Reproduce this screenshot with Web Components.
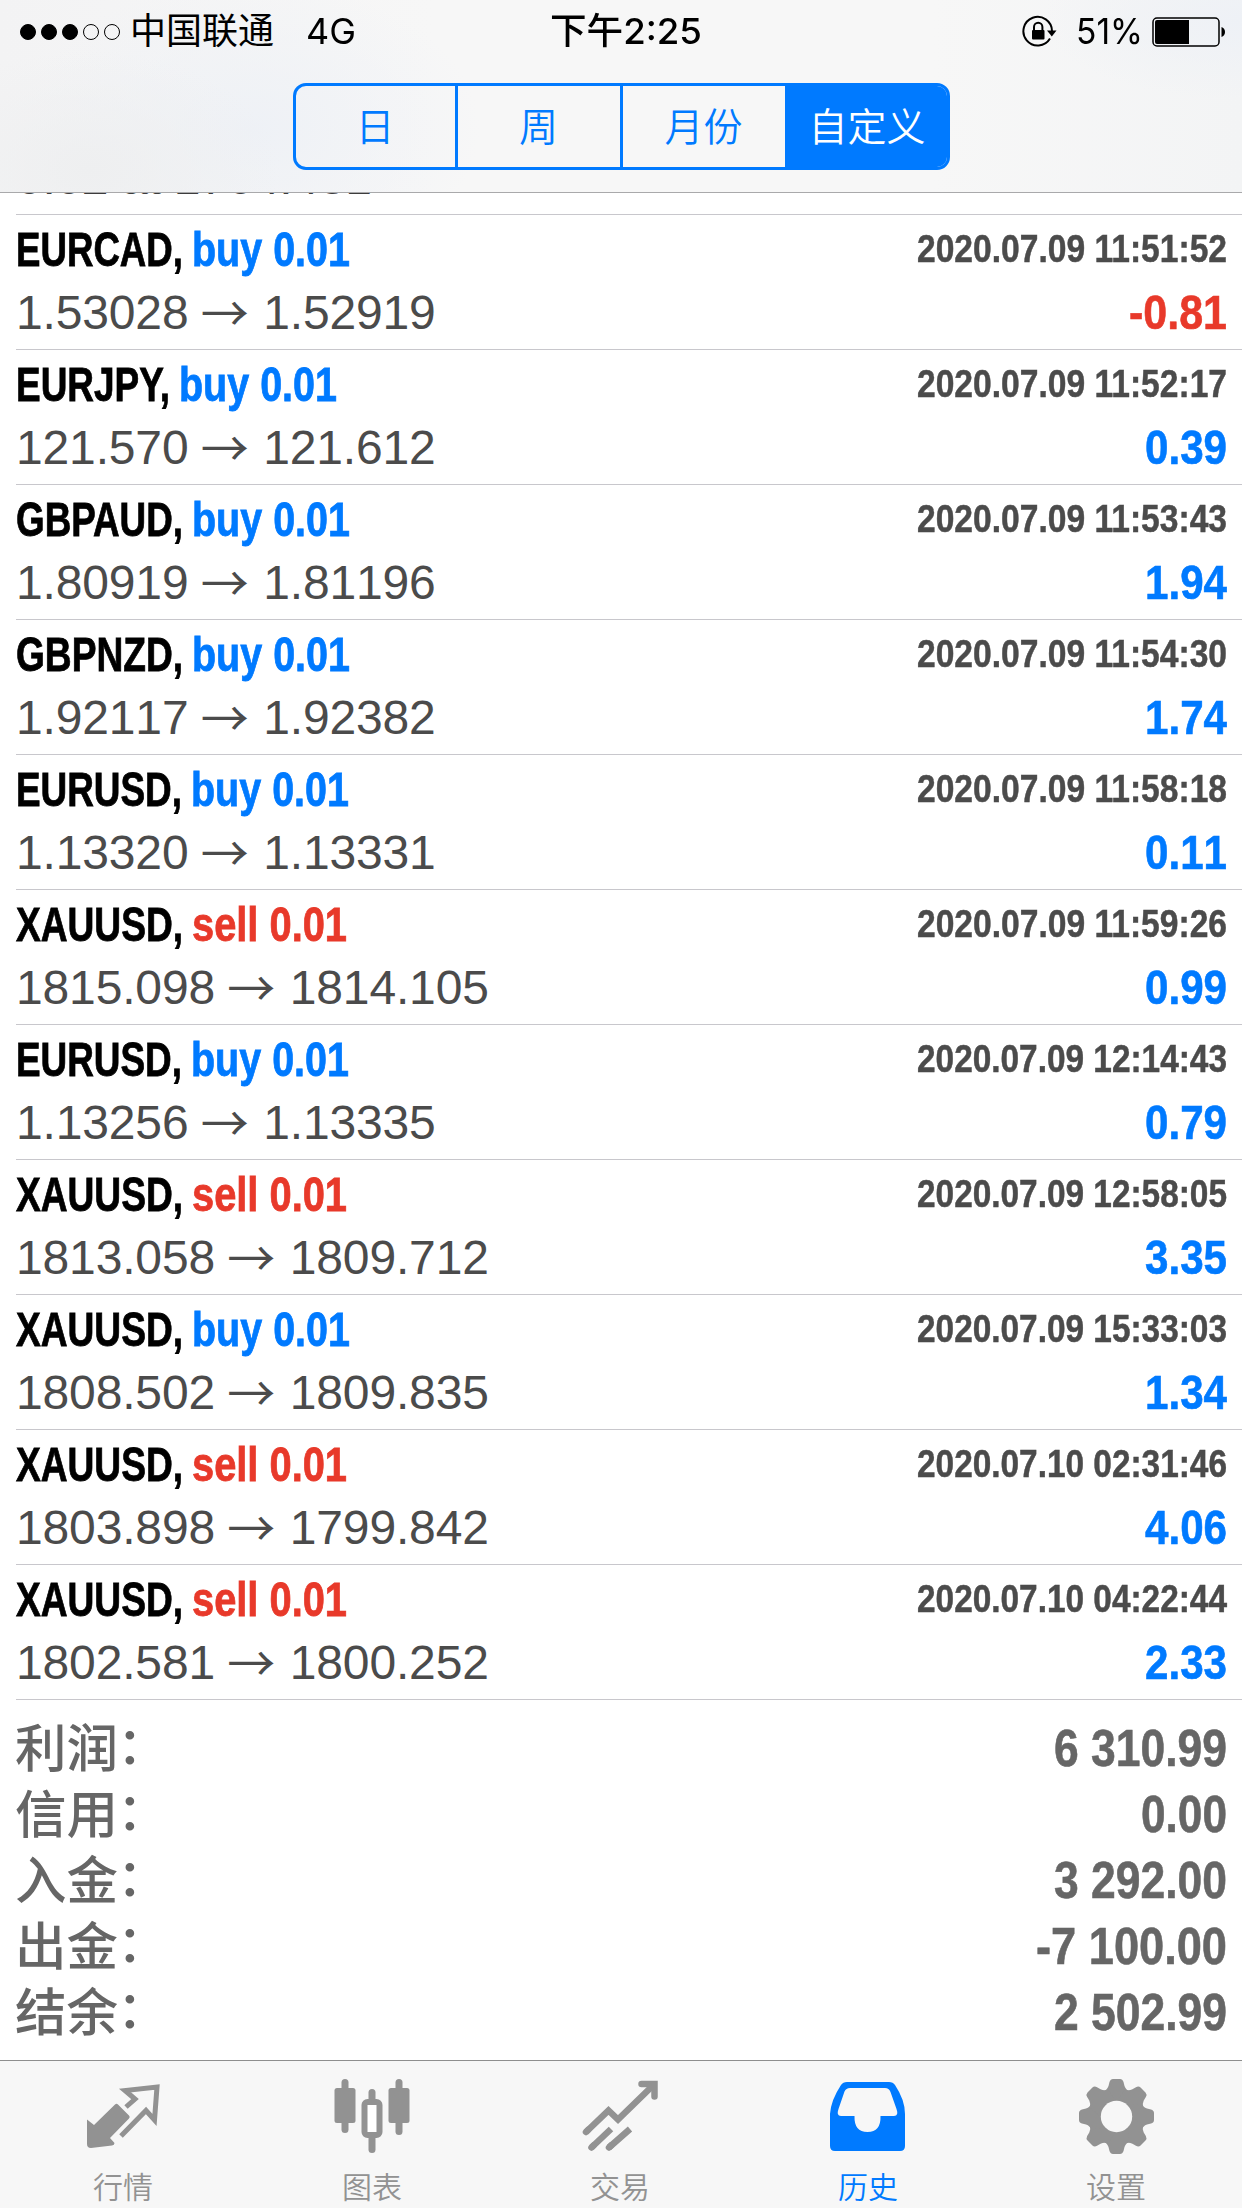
<!DOCTYPE html>
<html lang="zh-CN">
<head>
<meta charset="utf-8">
<title>历史</title>
<style>
html,body{margin:0;padding:0;background:#fff}
body{width:1242px;height:2208px;overflow:hidden;font-family:"Liberation Sans","Noto Sans CJK SC",sans-serif}
</style>
</head>
<body>
<history-app></history-app>
<script>
const define = (name, render, after) => customElements.define(name, class extends HTMLElement {
  connectedCallback() {
    if (this.shadowRoot) return;
    this.attachShadow({ mode: "open" }).innerHTML = render(this);
    if (after) after(this);
  }
});

/* Text condensed horizontally to a given advance width */
define("condensed-text", el => `<style>
  :host{display:block;flex:none;white-space:pre;width:${el.getAttribute("w")}px}
  span{display:inline-block;transform-origin:0 50%}
</style><span>${el.getAttribute("text")}</span>`, el => {
  const s = el.shadowRoot.querySelector("span");
  s.style.transform = `scaleX(${el.getAttribute("w") / s.getBoundingClientRect().width})`;
});

define("status-bar", () => `<style>
  :host{display:grid;grid-template-columns:1fr 152px 1fr;height:60px;align-items:center;font:36px/63px Inter,"Noto Sans CJK SC",sans-serif;color:#000;white-space:pre}
  .l,.r{display:flex;align-items:center;height:60px}
  .l{padding-left:20px}
  .dots{display:flex;gap:5px;margin-right:10px}
  i{box-sizing:border-box;width:16px;height:16px;border:1.3px solid #000;border-radius:50%}
  i.on{background:#000}
  .net{margin-left:32px}
  .t{font-weight:500;margin-left:5px}
  .r{justify-content:flex-end;padding-right:16px}
  svg{display:block}
  .pct{margin:0 9px 0 18px}
</style>
<div class="l"><div class="dots"><i class="on"></i><i class="on"></i><i class="on"></i><i></i><i></i></div><span>中国联通</span><condensed-text class="net" w="50" text="4G"></condensed-text></div>
<condensed-text class="t" w="152" text="下午2:25"></condensed-text>
<div class="r">
<svg width="36" height="34" viewBox="0 0 36 34" fill="none" stroke="#000" stroke-width="2"><path d="M28 23.500A14.300 14.300 0 1 1 30 16"/><path d="M25 15.500h9.500l-4.700 6z" fill="#000" stroke="none"/><rect x="10" y="15" width="12.500" height="9.500" rx="1" fill="#000" stroke="none"/><path d="M12 16v-4a4.200 4.200 0 0 1 8.400 0V16"/></svg>
<condensed-text class="pct" w="67" text="51%"></condensed-text>
<svg width="74" height="32" viewBox="0 0 74 32"><rect x="1" y="2" width="66" height="28" rx="4" fill="none" stroke="#000" stroke-width="1.500"/><path d="M5 4h32v24H5a2 2 0 0 1-2-2V6a2 2 0 0 1 2-2z"/><path d="M69.500 11c2 .5 3.500 2.500 3.500 5s-1.500 4.500-3.500 5z"/></svg>
</div>`);

define("segment-control", () => `<style>
  :host{display:grid;grid-template-columns:159px 165px 165px 162px;box-sizing:border-box;width:657px;height:87px;border:3px solid #007aff;border-radius:13px;overflow:hidden;margin:0 auto;color:#007aff;font:350 39px/76px "Noto Sans CJK SC",sans-serif;text-align:center}
  div+div{border-left:3px solid #007aff}
  div:first-child{padding-right:4px}
  .on{background:#007aff;color:#fff}
</style><div>日</div><div>周</div><div>月份</div><div class="on">自定义</div>`);

define("nav-header", () => `<style>
  :host{display:block;box-sizing:border-box;height:193px;border-bottom:1px solid #a9a9ab;
   background:radial-gradient(ellipse 190px 120px at 90px 170px,#eeeff0,#eeeff000),radial-gradient(ellipse 230px 150px at 250px 130px,#eef1f6,#eef1f600),radial-gradient(ellipse 200px 80px at 1242px 20px,#eef1f6,#eef1f600),linear-gradient(90deg,#f3f3f4,#f7f7f7 35%,#f7f7f7 75%,#f3f4f5)}
  segment-control{margin-top:23px}
</style><status-bar></status-bar><segment-control></segment-control>`);

define("deal-row", el => {
  const a = n => el.getAttribute(n);
  return `<style>
  :host{display:block;box-sizing:border-box;height:135px;margin-left:16px;padding-right:15px;border-bottom:1px solid #c8c7cc}
  .a,.b{display:flex;align-items:flex-start}
  .a{height:64px;line-height:70px;font-weight:700;font-size:48px}
  .b{height:70px;line-height:68px;font-size:48px;color:#4b4b4b;font-kerning:none}
  .name,.op{-webkit-text-stroke:.8px currentColor}
  .op{margin-left:8.500px}
  .time{font-size:39px;line-height:68px;color:#4b4b4b;-webkit-text-stroke:.5px currentColor}
  .sp{flex:1}
  .v{letter-spacing:-.15px}
  .arr{display:inline-block;font-family:"Noto Sans CJK SC",sans-serif;font-weight:400;line-height:1px;vertical-align:-1.500px;margin:0 1.500px 0 -1px}
  .buy{color:#007aff}.sell{color:#e8392a}
  .p{font-weight:700;-webkit-text-stroke:.6px currentColor}
</style>
<div class="a"><condensed-text class="name" w="${a("sw")}" text="${a("symbol")},"></condensed-text><condensed-text class="op ${a("side")}" w="${a("side") === "buy" ? 158 : 155}" text="${a("side")} 0.01"></condensed-text><span class="sp"></span><condensed-text class="time" w="310" text="${a("time")}"></condensed-text></div>
<div class="b"><span class="v">${a("from")} <span class="arr">→</span> ${a("to")}</span><span class="sp"></span><condensed-text class="p ${a("profit")[0] === "-" ? "sell" : "buy"}" w="${a("profit")[0] === "-" ? 98 : 82}" text="${a("profit")}"></condensed-text></div>`;
});

define("total-row", el => `<style>
  :host{display:flex;align-items:flex-start;height:66px;line-height:66px;padding:0 15px 0 15px;color:#666;font-weight:700;font-size:51px}
  .k{flex:1;font:500 51.500px/66px "Noto Sans CJK SC",sans-serif}
  .c{position:relative;top:-3px;left:-1px}
  condensed-text{line-height:74px;-webkit-text-stroke:.6px currentColor}
</style><span class="k">${el.getAttribute("label")}<span class="c">：</span></span><condensed-text w="${el.getAttribute("w")}" text="${el.getAttribute("value")}"></condensed-text>`);

define("tab-item", el => `<style>
  :host{display:flex;flex-direction:column;align-items:center;color:#929292}
  :host([active]){color:#007aff}
  svg{display:block;margin-top:15px}
  span{font:350 30px/36px "Noto Sans CJK SC",sans-serif;margin-top:11px}
</style><svg width="80" height="80" viewBox="0 0 80 80" fill="currentColor">${ICONS[el.getAttribute("icon")]}</svg><span><slot></slot></span>`);

const gear = () => {
  let d = "";
  for (let i = 0; i < 8; i++) d += `<path transform="rotate(${i * 45} 40.500 40.500)" d="M28 15Q31 14 32.500 10L33.500 6Q34.500 3 37 3H44Q46.500 3 47.500 6L48.500 10Q50 14 53 15L52 28H29Z"/>`;
  return `<mask id="m"><rect width="80" height="80" fill="#fff"/><circle cx="40.500" cy="40.500" r="15.700" fill="#000"/></mask><g mask="url(#m)"><circle cx="40.500" cy="40.500" r="28"/>${d}</g>`;
};
const ICONS = {
  quotes: `<path d="M4 43.500 11 49 32 28.500Q33.500 27 35 28.500L46 39.500Q47.500 41 46 42.500L27 62 31.500 67Q31.500 69 29 69.500L8 72Q4 72 4 68Z"/><path d="M43 31 52 23 42 14.500 74 11 71.500 44 63 34.500 38 60" fill="none" stroke="currentColor" stroke-width="5"/>`,
  chart: `<rect x="2.500" y="12" width="21" height="35" rx="2.500"/><rect x="9.500" y="3" width="7" height="54" rx="3.500"/><rect x="56.500" y="12" width="21" height="35" rx="2.500"/><rect x="63.500" y="3" width="7" height="56" rx="3.500"/><rect x="36.500" y="13" width="7" height="20" rx="3.500"/><rect x="36.500" y="57" width="7" height="20" rx="3.500"/><rect x="32.500" y="26" width="15" height="33" rx="3" fill="#fff" stroke="currentColor" stroke-width="6"/>`,
  trade: `<g fill="none" stroke="currentColor" stroke-width="6.500"><path d="M6 56 28.500 34.500 38 43.500 74.500 8" /><path stroke-linecap="round" d="M61.500 8H74.500V20.500M6 56l2-2M11.500 71.500l2-2M29 71.500l2-2"/><path d="M11.500 71.500 31 53M29 71.500 50 53"/></g>`,
  history: `<path fill-rule="evenodd" d="M13 9Q15 6 19 6H61Q65 6 67 9Q77 24 77 38V70Q77 75 72 75H7Q2 75 2 70V38Q3 24 13 9ZM22 12Q18 12 16.500 15.500L10.500 33Q8 40 13 40H26.500Q26 56 39.500 56Q53 56 52.500 40H66Q71 40 68.500 33L62.500 16Q61 12 57 12Z"/>`,
  settings: gear()
};

define("tab-bar", () => `<style>
  :host{display:grid;grid-template-columns:246px 252px 244px 252px 1fr;box-sizing:border-box;height:148px;border-top:1px solid #8e8e8e;background:#f7f7f7}
  tab-item:last-child{padding-right:4px}
</style><tab-item icon="quotes">行情</tab-item><tab-item icon="chart">图表</tab-item><tab-item icon="trade">交易</tab-item><tab-item icon="history" active>历史</tab-item><tab-item icon="settings">设置</tab-item>`);

const DEALS = [
  ["EURCAD","buy","1.53028","1.52919","2020.07.09 11:51:52","-0.81",167],
  ["EURJPY","buy","121.570","121.612","2020.07.09 11:52:17","0.39",154],
  ["GBPAUD","buy","1.80919","1.81196","2020.07.09 11:53:43","1.94",167],
  ["GBPNZD","buy","1.92117","1.92382","2020.07.09 11:54:30","1.74",167],
  ["EURUSD","buy","1.13320","1.13331","2020.07.09 11:58:18","0.11",166],
  ["XAUUSD","sell","1815.098","1814.105","2020.07.09 11:59:26","0.99",167],
  ["EURUSD","buy","1.13256","1.13335","2020.07.09 12:14:43","0.79",166],
  ["XAUUSD","sell","1813.058","1809.712","2020.07.09 12:58:05","3.35",167],
  ["XAUUSD","buy","1808.502","1809.835","2020.07.09 15:33:03","1.34",167],
  ["XAUUSD","sell","1803.898","1799.842","2020.07.10 02:31:46","4.06",167],
  ["XAUUSD","sell","1802.581","1800.252","2020.07.10 04:22:44","2.33",167]
];
const TOTALS = [["利润","6 310.99",173],["信用","0.00",86],["入金","3 292.00",173],["出金","-7 100.00",191],["结余","2 502.99",173]];

define("history-app", () => `<style>
  :host{display:flex;flex-direction:column;width:1242px;height:2208px;background:#fff}
  .clip{flex:none;display:flex;align-items:flex-end;height:21px;margin-left:16px;border-bottom:1px solid #c8c7cc;overflow:hidden;font-size:48px;line-height:58px;color:#3c3c3c}
  .clip span{margin-bottom:7px;letter-spacing:-.3px}
  .totals{flex:1;padding-top:12px}
</style>
<nav-header></nav-header>
<div class="clip"><span>0.02 at 1764.481</span></div>
<div>${DEALS.map(d => `<deal-row symbol="${d[0]}" side="${d[1]}" from="${d[2]}" to="${d[3]}" time="${d[4]}" profit="${d[5]}" sw="${d[6]}"></deal-row>`).join("")}</div>
<div class="totals">${TOTALS.map(t => `<total-row label="${t[0]}" value="${t[1]}" w="${t[2]}"></total-row>`).join("")}</div>
<tab-bar></tab-bar>`);
</script>
</body>
</html>
